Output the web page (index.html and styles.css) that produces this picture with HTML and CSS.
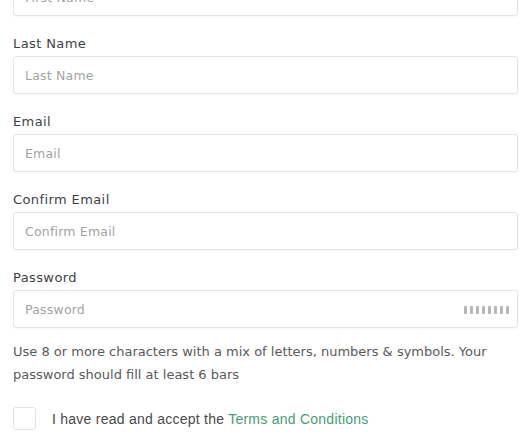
FILE: index.html
```html
<!DOCTYPE html>
<html lang="en">
<head>
  <meta charset="UTF-8">
  <title>Sign Up</title>
  <link rel="stylesheet" href="styles.css">
</head>
<body>
  <form class="signup">
    <div class="field">
      <label for="firstName">First Name</label>
      <input type="text" id="firstName" placeholder="First Name">
    </div>

    <div class="field">
      <label for="lastName">Last Name</label>
      <input type="text" id="lastName" placeholder="Last Name">
    </div>

    <div class="field">
      <label for="email">Email</label>
      <input type="email" id="email" placeholder="Email">
    </div>

    <div class="field">
      <label for="confirmEmail">Confirm Email</label>
      <input type="email" id="confirmEmail" placeholder="Confirm Email">
    </div>

    <div class="field">
      <label for="password">Password</label>
      <div class="password-box">
        <input type="password" id="password" placeholder="Password">
        <div class="bars">
          <span></span><span></span><span></span><span></span>
          <span></span><span></span><span></span><span></span>
        </div>
      </div>
    </div>

    <p class="hint">Use 8 or more characters with a mix of letters, numbers &amp; symbols. Your password should fill at least 6 bars</p>

    <label class="terms">
      <input type="checkbox" id="acceptTerms">
      <span>I have read and accept the <a href="#">Terms and Conditions</a></span>
    </label>
  </form>
</body>
</html>
```

FILE: styles.css
```css
body { margin: 0; background: #fff; font-family: "DejaVu Sans", sans-serif; color: #444; }
.signup { padding: 0 13px; margin-top: -43px; }
.field { display: flex; flex-direction: column; margin-bottom: 19px; }
.field label { font-size: 13px; letter-spacing: 0.4px; line-height: 18px; margin-bottom: 3px; color: #3f3f46; }
.field input { box-sizing: border-box; height: 38px; width: 100%; padding: 0 11px; border: 1px solid #e6e3e3; border-radius: 3px; box-shadow: 0 1px 2px rgba(0,0,0,0.04); background: #fff; font-family: inherit; font-size: 12.5px; letter-spacing: 0.2px; color: #444; outline: none; }
.field input::placeholder { color: #a3a3a3; }
.password-box { position: relative; }
.password-box input { padding-right: 70px; }
.bars { position: absolute; right: 9px; top: 16px; display: flex; gap: 3px; }
.bars span { width: 3px; height: 8px; background: #b5b5b5; border-radius: 1px; }
.field:last-of-type { margin-bottom: 0; }
.hint { margin: 12px 0 0; font-size: 13px; line-height: 23px; color: #5a5a5a; }
.terms { display: flex; align-items: center; gap: 16px; margin-top: 21px; font-family: "Liberation Sans", Arial, sans-serif; font-size: 14px; letter-spacing: 0.25px; color: #4a4a4a; }
.terms input { appearance: none; margin: 0; width: 23px; height: 23px; border: 1px solid #e6e3e3; border-radius: 3px; background: #fff; }
.terms a { color: #4b9a78; text-decoration: none; }
```
